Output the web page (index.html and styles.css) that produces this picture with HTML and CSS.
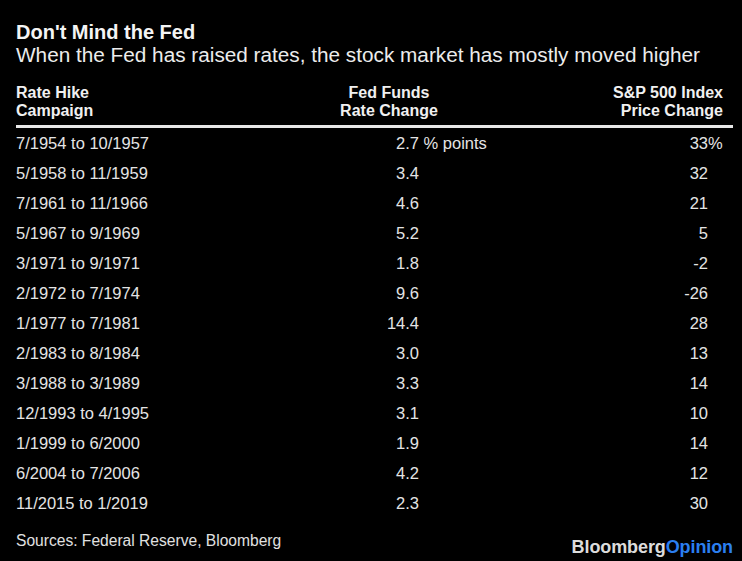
FILE: index.html
```html
<!DOCTYPE html>
<html lang="en">
<head>
<meta charset="utf-8">
<title>Don't Mind the Fed</title>
<link rel="stylesheet" href="styles.css">
</head>
<body>
<div class="wrap">
  <h1 class="title">Don't Mind the Fed</h1>
  <p class="subtitle">When the Fed has raised rates, the stock market has mostly moved higher</p>
  <div class="table">
    <div class="head">
      <div class="h1">Rate Hike<br>Campaign</div>
      <div class="h2">Fed Funds<br>Rate Change</div>
      <div class="h3">S&amp;P 500 Index<br>Price Change</div>
    </div>
    <div class="row"><div class="c1">7/1954 to 10/1957</div><div class="c2">2.7<span class="unit"> % points</span></div><div class="c3">33<span class="unit">%</span></div></div>
    <div class="row"><div class="c1">5/1958 to 11/1959</div><div class="c2">3.4</div><div class="c3">32</div></div>
    <div class="row"><div class="c1">7/1961 to 11/1966</div><div class="c2">4.6</div><div class="c3">21</div></div>
    <div class="row"><div class="c1">5/1967 to 9/1969</div><div class="c2">5.2</div><div class="c3">5</div></div>
    <div class="row"><div class="c1">3/1971 to 9/1971</div><div class="c2">1.8</div><div class="c3">-2</div></div>
    <div class="row"><div class="c1">2/1972 to 7/1974</div><div class="c2">9.6</div><div class="c3">-26</div></div>
    <div class="row"><div class="c1">1/1977 to 7/1981</div><div class="c2">14.4</div><div class="c3">28</div></div>
    <div class="row"><div class="c1">2/1983 to 8/1984</div><div class="c2">3.0</div><div class="c3">13</div></div>
    <div class="row"><div class="c1">3/1988 to 3/1989</div><div class="c2">3.3</div><div class="c3">14</div></div>
    <div class="row"><div class="c1">12/1993 to 4/1995</div><div class="c2">3.1</div><div class="c3">10</div></div>
    <div class="row"><div class="c1">1/1999 to 6/2000</div><div class="c2">1.9</div><div class="c3">14</div></div>
    <div class="row"><div class="c1">6/2004 to 7/2006</div><div class="c2">4.2</div><div class="c3">12</div></div>
    <div class="row"><div class="c1">11/2015 to 1/2019</div><div class="c2">2.3</div><div class="c3">30</div></div>
  </div>
  <div class="footer">
    <div class="sources">Sources: Federal Reserve, Bloomberg</div>
    <div class="logo"><span class="bb">Bloomberg</span><span class="op">Opinion</span></div>
  </div>
</div>
</body>
</html>
```
FILE: styles.css
```css
html, body {
  margin: 0;
  padding: 0;
  background: #000;
}
body {
  width: 742px;
  height: 561px;
  overflow: hidden;
  font-family: "Liberation Sans", Arial, sans-serif;
  color: #e4e4e4;
}
.wrap {
  padding: 20px 9px 0 16px;
}
.title {
  margin: 0;
  font-size: 20px;
  line-height: 24px;
  font-weight: 700;
  color: #f4f4f4;
}
.subtitle {
  margin: -1px 0 0;
  font-size: 20.75px;
  line-height: 24px;
  font-weight: 400;
  color: #ececec;
}
.table {
  margin-top: 17px;
}
.head, .row {
  display: grid;
  grid-template-columns: 324px 98px 1fr;
}
.head {
  font-size: 16px;
  line-height: 18px;
  font-weight: 700;
  color: #f0f0f0;
  padding-bottom: 5px;
  border-bottom: 3px solid #e8e8e8;
}
.h2 {
  text-align: center;
}
.h3 {
  text-align: right;
  padding-right: 10px;
}
.row {
  font-size: 16.5px;
  line-height: 30px;
}
.c2 {
  text-align: right;
  padding-right: 19px;
}
.c3 {
  text-align: right;
  padding-right: 25px;
}
.unit {
  display: inline-block;
  width: 0;
  white-space: pre;
  text-align: left;
  overflow: visible;
}
.footer {
  display: flex;
  justify-content: space-between;
  align-items: flex-start;
  margin-top: 13px;
}
.sources {
  font-size: 15.6px;
  line-height: 20px;
  color: #e0e0e0;
}
.logo {
  margin-top: 5px;
  font-size: 18px;
  line-height: 22px;
  font-weight: 700;
  letter-spacing: -0.1px;
}
.bb {
  color: #dcdcdc;
}
.op {
  color: #2b7ff0;
}
```
